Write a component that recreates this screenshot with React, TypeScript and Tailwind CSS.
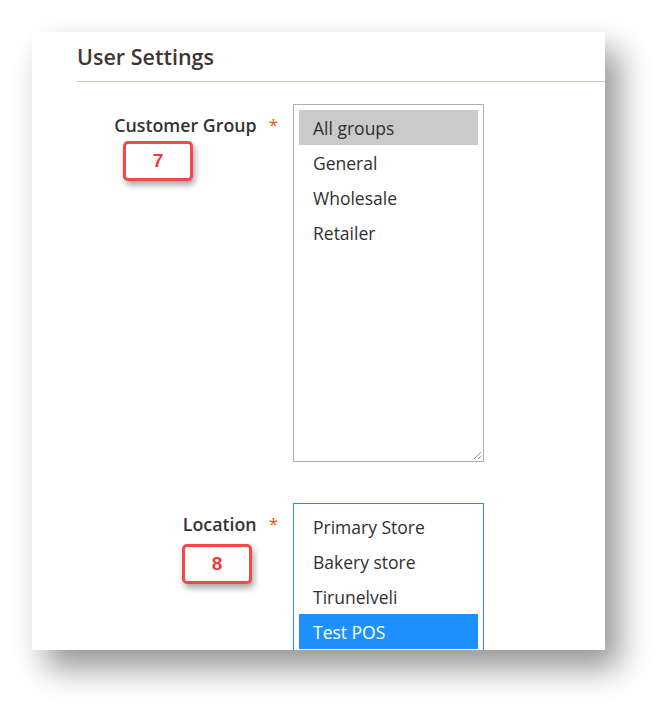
const groups = ["All groups", "General", "Wholesale", "Retailer"];
const locations = ["Primary Store", "Bakery store", "Tirunelveli", "Test POS"];

function Badge({ n, className }: { n: string; className: string }) {
  return (
    <div
      className={`absolute w-[70px] h-[40px] rounded-[5px] border-[3px] border-[#f4474a] bg-white flex items-center justify-center text-[#f0393d] text-[19px] font-bold shadow-[2px_4px_6px_rgba(0,0,0,0.35)] font-['Liberation_Sans',Arial,sans-serif] ${className}`}
    >
      {n}
    </div>
  );
}

function Label({ text }: { text: string }) {
  return (
    <div className="w-[216px] flex justify-end pr-[15px] pt-[10px] shrink-0">
      <span className="text-[17.8px] leading-[22px] font-semibold text-[#333]">{text}</span>
      <span className="ml-[12px] text-[17px] leading-[22px] text-[#eb5202]">*</span>
    </div>
  );
}

export default function App() {
  return (
    <div className="w-[670px] h-[716px] bg-white pt-[32px] pl-[32px] font-['Open_Sans',sans-serif]">
      <div className="w-[573px] h-[618px] bg-white overflow-hidden pl-[45px] shadow-[14px_18px_30px_rgba(0,0,0,0.42)]">
        {/* Title */}
        <div className="pt-[11px] pb-[10px] border-b border-[#cdc7bb]">
          <h2 className="text-[21.5px] leading-[28px] font-semibold text-[#41362f]">User Settings</h2>
        </div>

        {/* Customer Group */}
        <div className="relative flex mt-[22px]">
          <Label text="Customer Group" />
          <div className="relative w-[191px] h-[358px] border border-[#adadad] p-[5px]">
            {groups.map((g, i) => (
              <div
                key={g}
                className={`h-[35px] pl-[14px] pt-[1px] flex items-center text-[17.5px] text-[#303030] ${i === 0 ? "bg-[#cacaca]" : ""}`}
              >
                {g}
              </div>
            ))}
            <svg className="absolute right-[1px] bottom-[1px]" width="10" height="10" viewBox="0 0 10 10">
              <path d="M9 2 L2 9 M9 6 L6 9" stroke="#999" strokeWidth="1" fill="none" />
            </svg>
          </div>
          <Badge n="7" className="left-[46px] top-[37px]" />
        </div>

        {/* Location */}
        <div className="relative flex mt-[41px]">
          <Label text="Location" />
          <div className="w-[191px] h-[160px] border border-[#2f8ae8] p-[5px]">
            {locations.map((l, i) => (
              <div
                key={l}
                className={`h-[35px] pl-[14px] pt-[1px] flex items-center text-[17.5px] ${i === 3 ? "bg-[#1e90ff] text-white" : "text-[#303030]"}`}
              >
                {l}
              </div>
            ))}
          </div>
          <Badge n="8" className="left-[105px] top-[41px]" />
        </div>
      </div>
    </div>
  );
}
